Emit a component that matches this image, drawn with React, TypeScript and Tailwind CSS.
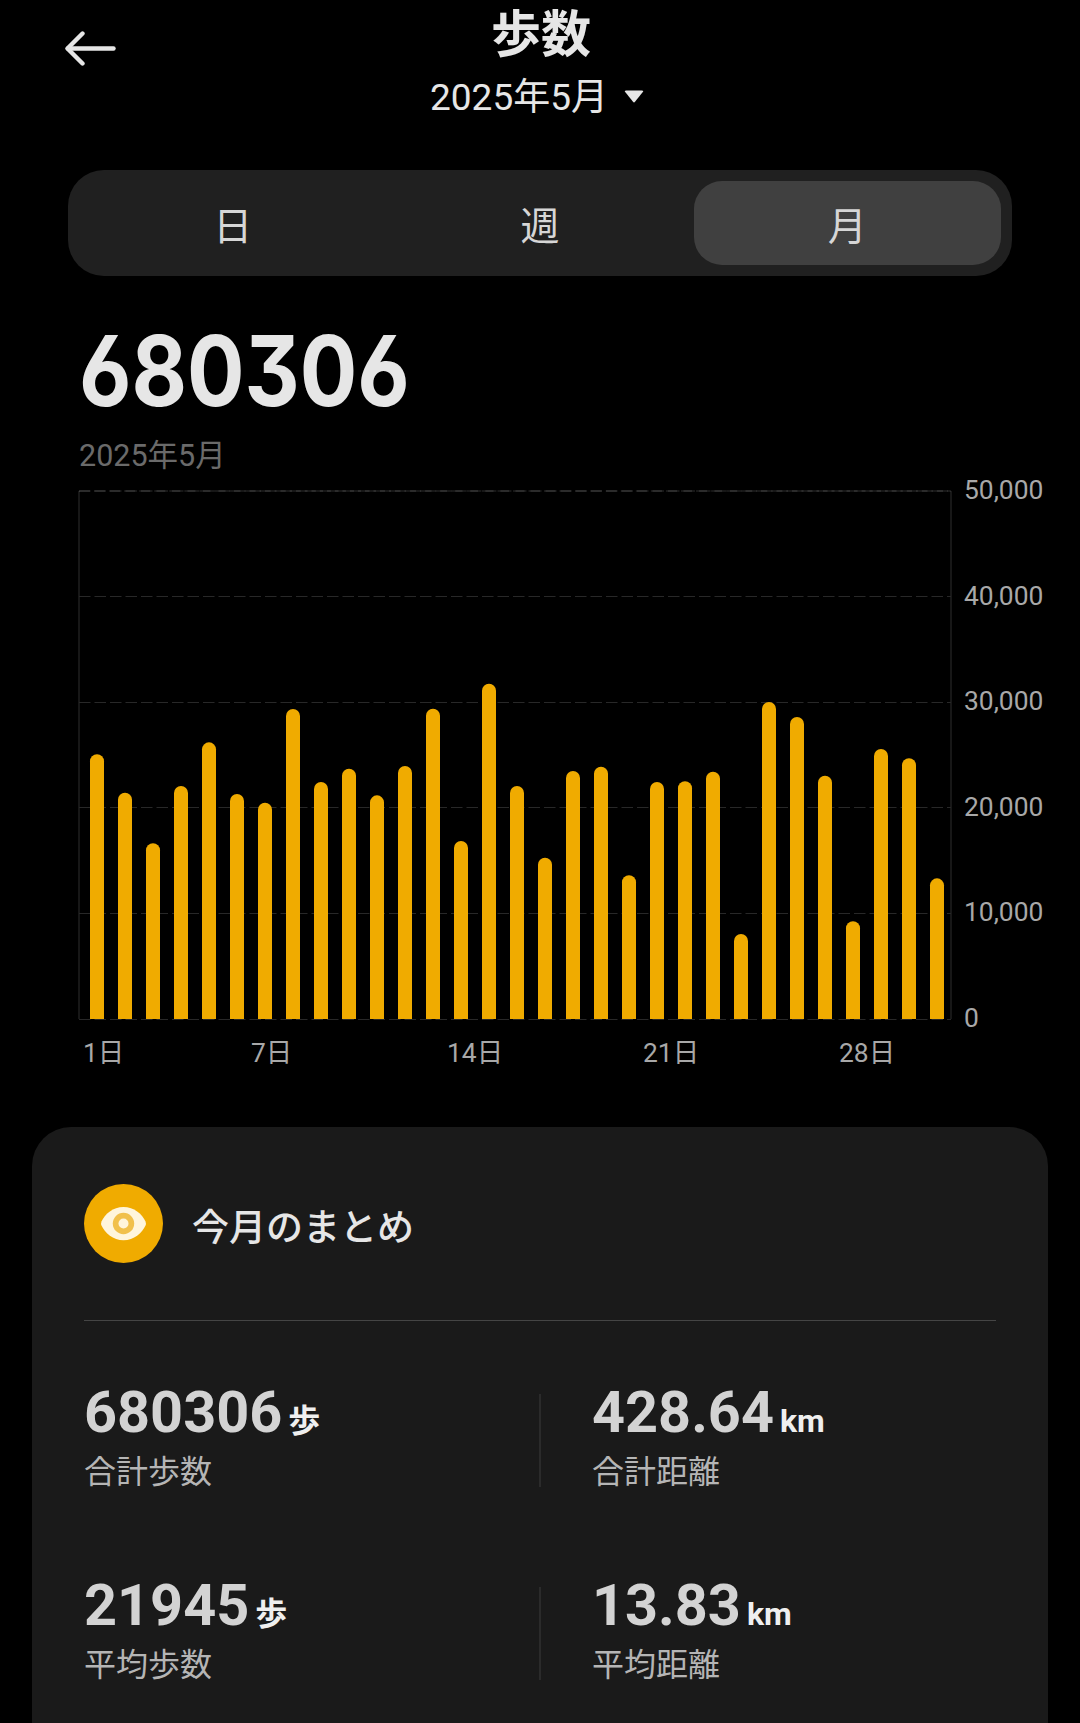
import { useState } from "react";

const DAILY_STEPS = [
  25070, 21430, 16640, 22060, 26200, 21300, 20480, 29360, 22440, 23700, 21180,
  23960, 29380, 16860, 31750, 22060, 15270, 23480, 23890, 13610, 22440, 22510,
  23420, 8050, 30020, 28600, 23040, 9250, 25570, 24690, 13320,
];

const MAX_STEPS = 50000;
const GRID_VALUES = [40000, 30000, 20000, 10000, 0];
const Y_LABELS = ["50,000", "40,000", "30,000", "20,000", "10,000", "0"];
const X_LABELS = [
  { text: "1日", x: 83 },
  { text: "7日", x: 251 },
  { text: "14日", x: 447 },
  { text: "21日", x: 643 },
  { text: "28日", x: 839 },
];

const TABS = ["日", "週", "月"];

const STATS = [
  { value: "680306", unit: "歩", label: "合計歩数" },
  { value: "428.64", unit: "km", label: "合計距離" },
  { value: "21945", unit: "歩", label: "平均歩数" },
  { value: "13.83", unit: "km", label: "平均距離" },
];

const PLOT_LEFT = 79;
const PLOT_RIGHT = 951;
const PLOT_TOP = 26;
const PLOT_HEIGHT = 528;
const PLOT_BOTTOM = PLOT_TOP + PLOT_HEIGHT;

// Bars are square at the baseline and fully rounded on top
function barPath(index: number, steps: number) {
  const x = 90 + index * 28;
  const y = PLOT_BOTTOM - (steps / MAX_STEPS) * PLOT_HEIGHT;
  return `M${x} ${PLOT_BOTTOM}V${y + 7}a7 7 0 0 1 14 0V${PLOT_BOTTOM}Z`;
}

function StepsChart() {
  return (
    <svg width="1080" height="616" viewBox="0 0 1080 616" className="block">
      <g stroke="#1f1f1f" strokeWidth="1.5">
        <line x1={PLOT_LEFT} y1={PLOT_TOP} x2={PLOT_LEFT} y2={PLOT_BOTTOM} />
        <line x1={PLOT_RIGHT} y1={PLOT_TOP} x2={PLOT_RIGHT} y2={PLOT_BOTTOM} />
      </g>
      <g stroke="#282828" strokeWidth="1">
        {GRID_VALUES.map((value) => {
          const y = Math.floor(PLOT_BOTTOM - (value / MAX_STEPS) * PLOT_HEIGHT) + 0.5;
          return (
            <line
              key={value}
              x1={PLOT_LEFT}
              y1={y}
              x2={PLOT_RIGHT}
              y2={y}
              strokeDasharray="11.5 4"
            />
          );
        })}
      </g>
      {/* The top rule is two dash patterns drawn over each other */}
      <g stroke="#ffffff" strokeOpacity="0.09" strokeWidth="2">
        <line x1={PLOT_LEFT} y1={PLOT_TOP} x2={PLOT_RIGHT} y2={PLOT_TOP} strokeDasharray="11.5 4" />
        <line x1={PLOT_LEFT} y1={PLOT_TOP} x2={PLOT_RIGHT} y2={PLOT_TOP} strokeDasharray="11.05 4" />
      </g>
      <g fill="#f0ab00">
        {DAILY_STEPS.map((steps, index) => (
          <path key={index} d={barPath(index, steps)} />
        ))}
      </g>
      <g fill="#a8a8a8" fontSize="26.4">
        {Y_LABELS.map((label, index) => (
          <text key={label} x="964" y={34 + Math.round(index * 105.6)}>
            {label}
          </text>
        ))}
        {X_LABELS.map(({ text, x }) => (
          <text key={text} x={x} y="597">
            {text}
          </text>
        ))}
      </g>
    </svg>
  );
}

export default function App() {
  const [activeTab, setActiveTab] = useState("月");

  return (
    <div className="h-[1723px] w-[1080px] overflow-hidden bg-black font-['Roboto','Noto_Sans_CJK_JP',sans-serif] text-[#e6e6e6]">
      <header className="grid h-[170px] grid-cols-[200px_1fr_200px]">
        <button className="ml-[65px] mt-[30px] h-[37px] w-[52px]" aria-label="戻る">
          <svg
            width="52"
            height="37"
            viewBox="0 0 52 37"
            fill="none"
            stroke="#e6e6e6"
            strokeWidth="4.4"
            strokeLinecap="round"
            strokeLinejoin="round"
          >
            <path d="M48.500 18.500H3" />
            <path d="M17.500 3.500L2.500 18.500L17.500 33.500" />
          </svg>
        </button>
        <div className="flex flex-col items-center pt-[2px]">
          <h1 className="ml-[2px] h-[66px] text-[50px] font-bold leading-[66px]">歩数</h1>
          <button className="mt-[4px] flex h-[52px] items-center gap-[16px] pr-[6px] text-[37px] leading-[52px]">
            <span>2025年5月</span>
            <svg width="20" height="13" viewBox="0 0 20 13" fill="#e6e6e6" className="mb-[4px]">
              <path d="M2 0.500h16q2 0 .8 1.600L11 11.800q-1 1.200-2 0L1.200 2.100Q0 .5 2 .5Z" />
            </svg>
          </button>
        </div>
      </header>

      <div className="mx-[68px] grid h-[106px] grid-cols-3 rounded-[36px] bg-[#202020] p-[11px]">
        {TABS.map((tab) => (
          <button
            key={tab}
            onClick={() => setActiveTab(tab)}
            className={`rounded-[28px] pt-2 text-[39px] leading-none text-[#d6d6d6] ${
              activeTab === tab ? "bg-[#404040]" : ""
            }`}
          >
            {tab}
          </button>
        ))}
      </div>

      <section>
        <div className="flex h-[189px] flex-col pl-[79px]">
          <p className="mt-[45px] h-[99px] origin-left scale-x-[0.88] font-['Inter'] text-[97px] font-bold leading-[99px] [font-feature-settings:'cv09','cv03']">
            680306
          </p>
          <p className="mt-[14px] h-[44px] text-[30.5px] leading-[44px] text-[#6a6a6a]">2025年5月</p>
        </div>
        <StepsChart />
      </section>

      <section className="mx-8 mt-[46px] h-[640px] rounded-t-[39px] bg-[#1a1a1a] px-[52px] pt-[57px]">
        <div className="flex h-[79px] items-center gap-[29px]">
          <svg width="79" height="79" viewBox="0 0 79 79">
            <circle cx="39.500" cy="39.500" r="39.500" fill="#f0ab00" />
            <path
              d="M17.500 37.500C21 30 29 23 39.500 23S58 30 61.500 37.500Q62.300 39.500 61.500 41.500C58 49 50 56.200 39.500 56.200S21 49 17.500 41.500Q16.700 39.500 17.500 37.500Z"
              fill="#fff5dc"
            />
            <circle cx="39.500" cy="39.500" r="10.700" fill="#f1c04b" />
            <circle cx="39.500" cy="39.500" r="5" fill="#fff5dc" />
          </svg>
          <h2 className="pt-[10px] text-[37px] font-medium leading-none">今月のまとめ</h2>
        </div>
        <div className="mt-[57px] h-px bg-[#454545]" />

        <div className="mt-[54px] grid grid-cols-2 gap-y-[63px]">
          {STATS.map(({ value, unit, label }, index) => (
            <div
              key={label}
              className={`flex h-[130px] items-center ${index % 2 === 1 ? "-ml-px gap-[51px]" : ""}`}
            >
              {index % 2 === 1 && <div className="h-[93px] w-[2px] bg-[#2b2b2b]" />}
              <div>
                <p className="h-[64px] whitespace-nowrap font-bold leading-[55px]">
                  <span className="text-[57.6px] text-[#d3d3d3]">{value}</span>
                  <span className="ml-[6px] text-[32px] text-[#efefef]">{unit}</span>
                </p>
                <p className="text-[32px] leading-[46px] text-[#b5b5b5]">{label}</p>
              </div>
            </div>
          ))}
        </div>
      </section>
    </div>
  );
}
